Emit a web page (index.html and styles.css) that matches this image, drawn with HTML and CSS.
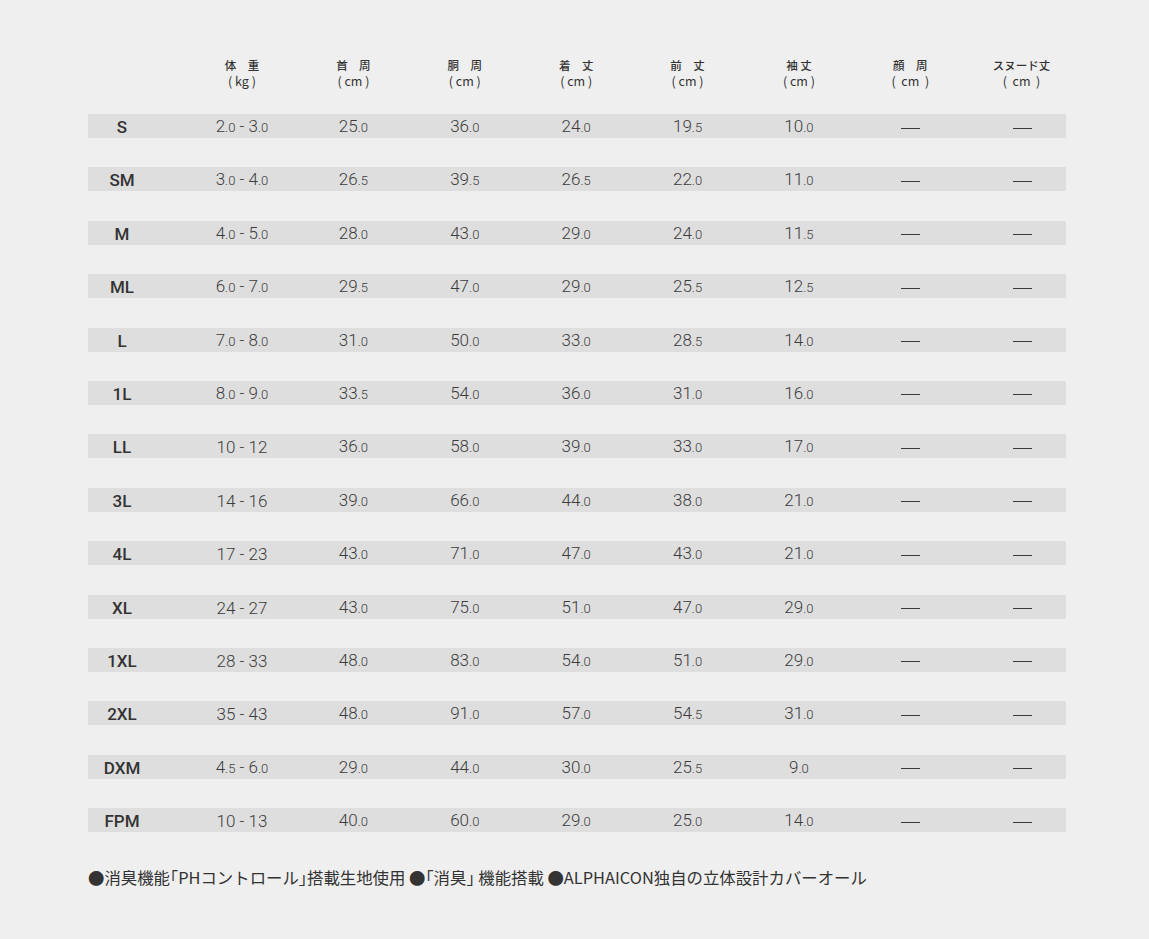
FILE: index.html
```html
<!DOCTYPE html>
<html lang="ja">
<head>
<meta charset="utf-8">
<title>サイズ表</title>
<link rel="stylesheet" href="styles.css">
</head>
<body>
<div class="page">
  <div class="table">
    <div class="head">
      <div class="hc size"></div>
      <div class="hc spacer"></div>
      <div class="hc"><span class="jp">体　重</span><span>( kg )</span></div>
      <div class="hc"><span class="jp">首　周</span><span>( cm )</span></div>
      <div class="hc"><span class="jp">胴　周</span><span>( cm )</span></div>
      <div class="hc"><span class="jp">着　丈</span><span>( cm )</span></div>
      <div class="hc"><span class="jp">前　丈</span><span>( cm )</span></div>
      <div class="hc"><span class="jp">袖 丈</span><span>( cm )</span></div>
      <div class="hc"><span class="jp">顔　周</span><span>(&nbsp; cm &nbsp;)</span></div>
      <div class="hc last"><span class="jp">スヌード丈</span><span>(&nbsp; cm &nbsp;)</span></div>
    </div>
    <div id="rows"></div>
  </div>
  <p class="note">●消臭機能｢PHコントロール｣搭載生地使用 ●｢消臭｣ 機能搭載 ●ALPHAICON独自の立体設計カバーオール</p>
</div>
<script src="app.js"></script>
</body>
</html>
```

FILE: styles.css
```css
html, body {
  margin: 0;
  padding: 0;
  background: #efefef;
}
.page {
  padding: 58px 0 0 88px;
  font-family: Roboto, "Noto Sans CJK JP", sans-serif;
  color: #444;
}
.table {
  width: 978px;
}
.head, .row {
  display: grid;
  grid-template-columns: 68px 30.3px repeat(7, 111.4px) 100px;
  align-items: center;
}
.head {
  height: 30px;
  margin-bottom: 26px;
}
.hc {
  display: flex;
  flex-direction: column;
  align-items: center;
  font-family: "Noto Sans CJK JP", sans-serif;
  font-size: 12.5px;
  line-height: 15px;
  color: #333;
}
.hc .jp {
  font-size: 11.5px;
  font-weight: 500;
}
.hc.last {
  padding-left: 11px;
}
.row {
  height: 24px;
  background: #dedede;
  margin-bottom: 29.4px;
}
.cell {
  text-align: center;
  font-size: 17px;
  font-weight: 300;
  line-height: 24px;
  color: #3c3c3c;
  white-space: nowrap;
}
.cell.size {
  font-weight: 500;
  color: #333;
  font-size: 17px;
}
.dec {
  font-size: 13px;
}
.cell.dash {
  display: flex;
  justify-content: center;
  align-items: center;
  padding-top: 2px;
}
.line {
  display: block;
  width: 19px;
  height: 1px;
  background: #3a3a3a;
}
.cell.dash.last {
  padding-left: 12px;
}
.note {
  margin: 34px 0 0 0;
  font-family: "Noto Sans CJK JP", sans-serif;
  font-size: 16.4px;
  line-height: 22px;
  color: #333;
}
```

FILE: app.js
```js
var data = [
  ["S", "2.0 - 3.0", "25.0", "36.0", "24.0", "19.5", "10.0"],
  ["SM", "3.0 - 4.0", "26.5", "39.5", "26.5", "22.0", "11.0"],
  ["M", "4.0 - 5.0", "28.0", "43.0", "29.0", "24.0", "11.5"],
  ["ML", "6.0 - 7.0", "29.5", "47.0", "29.0", "25.5", "12.5"],
  ["L", "7.0 - 8.0", "31.0", "50.0", "33.0", "28.5", "14.0"],
  ["1L", "8.0 - 9.0", "33.5", "54.0", "36.0", "31.0", "16.0"],
  ["LL", "10 - 12", "36.0", "58.0", "39.0", "33.0", "17.0"],
  ["3L", "14 - 16", "39.0", "66.0", "44.0", "38.0", "21.0"],
  ["4L", "17 - 23", "43.0", "71.0", "47.0", "43.0", "21.0"],
  ["XL", "24 - 27", "43.0", "75.0", "51.0", "47.0", "29.0"],
  ["1XL", "28 - 33", "48.0", "83.0", "54.0", "51.0", "29.0"],
  ["2XL", "35 - 43", "48.0", "91.0", "57.0", "54.5", "31.0"],
  ["DXM", "4.5 - 6.0", "29.0", "44.0", "30.0", "25.5", "9.0"],
  ["FPM", "10 - 13", "40.0", "60.0", "29.0", "25.0", "14.0"]
];
function fmt(v) {
  return v.replace(/(\d+)(\.\d)?/g, function (m, a, b) {
    return a + (b ? '<span class="dec">' + b + '</span>' : '');
  });
}
var html = "";
data.forEach(function (r) {
  html += '<div class="row"><div class="cell size">' + r[0] + '</div><div></div>';
  for (var i = 1; i < r.length; i++) {
    html += '<div class="cell">' + fmt(r[i]) + '</div>';
  }
  html += '<div class="cell dash"><span class="line"></span></div><div class="cell dash last"><span class="line"></span></div></div>';
});
document.getElementById("rows").innerHTML = html;
```
